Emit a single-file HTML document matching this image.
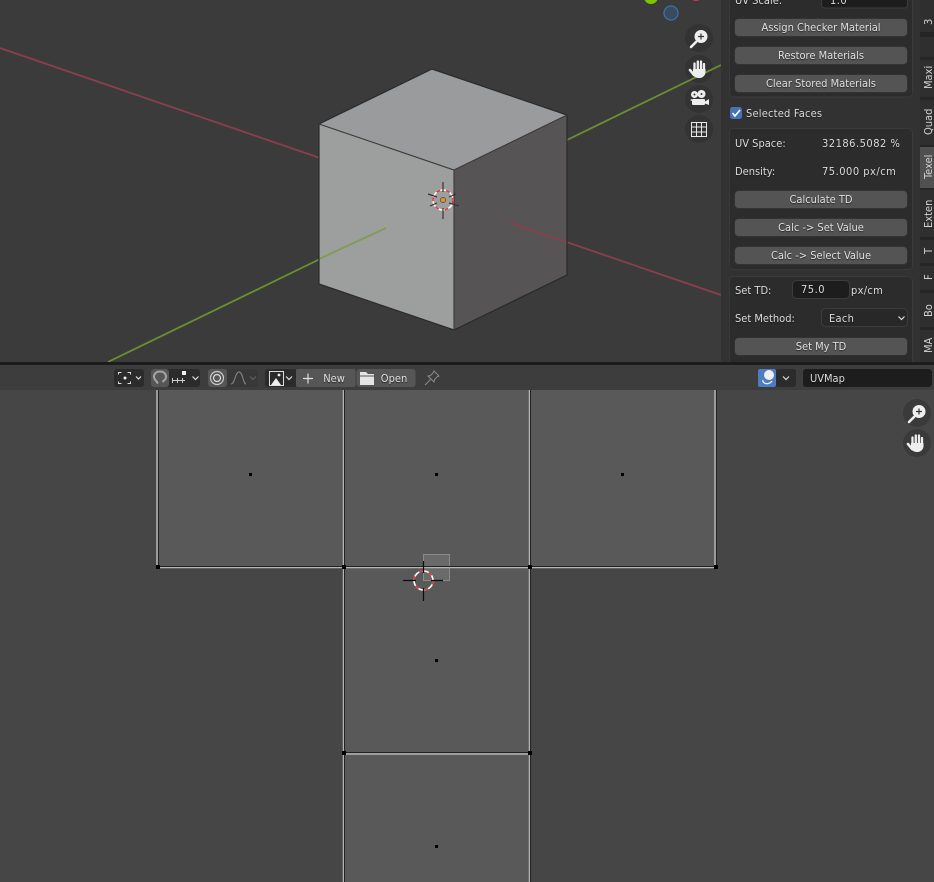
<!DOCTYPE html>
<html><head><meta charset="utf-8"><style>
html,body{margin:0;padding:0;background:#3b3b3b;width:934px;height:882px;overflow:hidden}
#r{position:relative;width:934px;height:882px;overflow:hidden;font:11px/18px "DejaVu Sans Condensed","DejaVu Sans",sans-serif;font-stretch:condensed;color:#dcdcdc}
svg{position:absolute;left:0;top:0}
.t{position:absolute;white-space:nowrap;margin-top:1px;text-shadow:0 1px 1px rgba(0,0,0,.45)}
.b{position:absolute;text-align:center;white-space:nowrap;margin-top:1px;text-shadow:0 1px 1px rgba(0,0,0,.6);color:#e0e0e0}
.n{letter-spacing:.5px}
.v{position:absolute;left:922px;width:14px;height:60px;text-align:center;white-space:nowrap;line-height:14px;writing-mode:vertical-rl;transform:rotate(180deg);color:#d2d2d2}
</style></head><body><div id="r">
<svg width="934" height="882" viewBox="0 0 934 882">
<rect width="934" height="362" fill="#3b3b3b"/>
<circle cx="651" cy="-3" r="7" fill="#7fc400"/>
<circle cx="696" cy="-5" r="6" fill="#e0304a"/>
<circle cx="671" cy="13" r="7" fill="#3b4a5c" stroke="#3a70b0" stroke-width="1.3"/>
<g fill="#333">
<circle cx="699" cy="38" r="14"/><circle cx="699" cy="69" r="14"/><circle cx="699" cy="99" r="14"/><circle cx="699" cy="129" r="14"/>
</g>
<path d="M0 48L320 158" stroke="#8c3e4d" stroke-width="1.800" fill="none"/>
<path d="M567 140L721 65M108 362L320 259" stroke="#6a9030" stroke-width="1.800" fill="none"/>
<path d="M319 124L432 69L567 115L454 170Z" fill="#9a9b9d"/>
<path d="M319 124L454 170V330L319 284Z" fill="#9d9e9e"/>
<path d="M454 170L567 115V275L454 330Z" fill="#575455"/>
<path d="M319 259L386 228" stroke="#7f9c50" stroke-width="1.800" fill="none"/>
<path d="M511 223L721 295" stroke="#8c3e4d" stroke-width="1.800" fill="none"/>
<path d="M319 124L432 69L567 115V275L454 330L319 284Z" fill="none" stroke="#2a2a2a" stroke-width="1.200"/>
<path d="M319 124L454 170L567 115M454 170V330" fill="none" stroke="#3a3a3a" stroke-width="1.100"/>
<g fill="none">
<circle cx="443" cy="200" r="10" stroke="#fff" stroke-width="1.600"/>
<circle cx="443" cy="200" r="10" stroke="#e0383e" stroke-width="1.600" stroke-dasharray="4 6"/>
<path d="M443 182V192M443 208V219M428 194L437 197M449 203L459 206M430 206L437 203M449 197L456 194" stroke="#333" stroke-width="1.200"/>
</g>
<circle cx="443" cy="200" r="2.600" fill="#f0901e" stroke="#333" stroke-width=".6"/>
<circle cx="701" cy="36.500" r="6.500" fill="#eee"/><path d="M696 42L691 47" stroke="#eee" stroke-width="2.600" stroke-linecap="round"/><path d="M698 36.500H704M701 33.500V39.500" stroke="#333" stroke-width="1.200"/>
<g stroke="#eee" stroke-linecap="round" fill="none"><path d="M694.500 70V63.500M697.800 70V61.500M701 70V61.500M704 71V64" stroke-width="2.300"/><path d="M690 70L694 75" stroke-width="2.600"/></g>
<path d="M693 69H705.500V72C705.500 75 703 78 699.500 78C696.500 78 694.500 77 693 75Z" fill="#eee"/>
<g fill="#eee"><circle cx="694.500" cy="94.500" r="3.500"/><circle cx="701.500" cy="94" r="4"/><rect x="692" y="99" width="13" height="6" rx="1"/><path d="M705 101.500L709 99V105L705 103.500ZM690 100L692 99V101Z"/></g>
<circle cx="694.500" cy="94.500" r="1" fill="#333"/><circle cx="701.500" cy="94" r="1" fill="#333"/>
<path d="M691.500 122.500H706.500V136.500H691.500ZM691.500 127H706.500M691.500 132H706.500M696.500 122.500V136.500M701.500 122.500V136.500" fill="none" stroke="#e8e8e8" stroke-width="1"/>

<rect x="721" y="0" width="213" height="362" fill="#323232"/>
<rect x="729.500" y="-10" width="183" height="107" rx="4" fill="#2c2c2c" stroke="#3a3a3a"/>
<rect x="729.500" y="128.500" width="183" height="141" rx="4" fill="#2c2c2c" stroke="#3a3a3a"/>
<rect x="729.500" y="276.500" width="183" height="95" rx="4" fill="#2c2c2c" stroke="#3a3a3a"/>
<rect x="920" y="0" width="14" height="362" fill="#262626"/>
<g fill="#2f2f2f">
<rect x="920" y="0" width="14" height="32"/><rect x="920" y="37" width="14" height="20"/><rect x="920" y="60" width="14" height="37"/><rect x="920" y="100" width="14" height="45"/><rect x="920" y="190" width="14" height="47"/><rect x="920" y="240" width="14" height="23"/><rect x="920" y="266" width="14" height="24"/><rect x="920" y="293" width="14" height="34"/><rect x="920" y="330" width="14" height="32"/>
</g>
<rect x="920" y="147" width="14" height="41" fill="#505050"/>
<g fill="#545454" stroke="#333" stroke-width="1">
<rect x="734.500" y="18.500" width="173" height="18" rx="4"/><rect x="734.500" y="46.500" width="173" height="18" rx="4"/><rect x="734.500" y="74.500" width="173" height="18" rx="4"/>
<rect x="734.500" y="190.500" width="173" height="18" rx="4"/><rect x="734.500" y="218.500" width="173" height="18" rx="4"/><rect x="734.500" y="246.500" width="173" height="18" rx="4"/>
<rect x="734.500" y="337.500" width="173" height="18" rx="4"/>
</g>
<rect x="821.500" y="-10" width="86" height="18" rx="3" fill="#1d1d1d" stroke="#3d3d3d"/>
<rect x="792.500" y="280.500" width="57" height="18" rx="4" fill="#1d1d1d" stroke="#3d3d3d"/>
<rect x="821.500" y="308.500" width="86" height="18" rx="4" fill="#282828" stroke="#3d3d3d"/>
<path d="M898.500 316.500L901.500 319.500L904.500 316.500" fill="none" stroke="#ddd" stroke-width="1.200"/>
<rect x="730" y="107" width="12" height="12" rx="2.500" fill="#4772b3"/>
<path d="M732.500 113L735 116L740 110" fill="none" stroke="#fff" stroke-width="1.600"/>

<rect y="362" width="934" height="3" fill="#1c1c1c"/>
<rect y="365" width="934" height="25" fill="#3d3d3d"/>
<rect y="390" width="934" height="492" fill="#464646"/>
<circle cx="917" cy="413" r="14" fill="#3a3a3a"/><circle cx="917" cy="443" r="14" fill="#3a3a3a"/>
<g fill="#595959">
<rect x="157" y="390" width="186" height="177"/><rect x="343" y="390" width="186" height="177"/><rect x="529" y="390" width="186" height="177"/>
<rect x="343" y="567" width="186" height="186"/><rect x="343" y="753" width="186" height="129"/>
</g>
<rect x="423.500" y="554.500" width="26" height="26" fill="#6a6a6a" stroke="#8a8a8a"/>
<g fill="none" stroke-width="1">
<path d="M157 390V567.500H715V390M343.500 390V753M529.500 390V882M343.500 753V882M343 754H529" stroke="#b5b5b5" stroke-width="1.500"/>
<path d="M158.500 390V566M344.500 390V566M530.500 390V566M344.500 568V752M530.500 568V752M344.500 755V882M530.500 755V882M157 566.500H715M344 752.500H529M716.500 390V566" stroke="#222" stroke-width="1"/>
</g>
<g fill="#000">
<rect x="156" y="565" width="4" height="4"/><rect x="342" y="565" width="4" height="4"/><rect x="528" y="565" width="4" height="4"/><rect x="714" y="565" width="4" height="4"/>
<rect x="342" y="751" width="4" height="4"/><rect x="528" y="751" width="4" height="4"/>
<rect x="249" y="473" width="3" height="3"/><rect x="435" y="473" width="3" height="3"/><rect x="621" y="473" width="3" height="3"/><rect x="435" y="659" width="3" height="3"/><rect x="435" y="845" width="3" height="3"/>
</g>
<g fill="none">
<circle cx="423.500" cy="580.500" r="9.500" stroke="#fff" stroke-width="1.600"/>
<circle cx="423.500" cy="580.500" r="9.500" stroke="#e0383e" stroke-width="1.600" stroke-dasharray="4 6"/>
<path d="M403 580.500H416M431 580.500H443M423.500 561V573M423.500 588V601" stroke="#0c0c0c" stroke-width="1.200"/>
</g>
<circle cx="919" cy="411.500" r="6.500" fill="#eee"/><path d="M914 417L909 422" stroke="#eee" stroke-width="2.600" stroke-linecap="round"/><path d="M916 411.500H922M919 408.500V414.500" stroke="#333" stroke-width="1.200"/>
<g stroke="#eee" stroke-linecap="round" fill="none"><path d="M912.500 444V437.500M915.800 444V435.500M919 444V435.500M922 445V438" stroke-width="2.300"/><path d="M908 444L912 449" stroke-width="2.600"/></g>
<path d="M911 443H923.500V446C923.500 449 921 452 917.500 452C914.500 452 912.500 451 911 449Z" fill="#eee"/>

<g>
<rect x="114" y="369" width="30" height="18" rx="3" fill="#2b2b2b"/>
<rect x="151" y="369" width="49" height="18" rx="3" fill="#2b2b2b"/>
<rect x="151" y="369" width="18" height="18" rx="3" fill="#565656"/>
<rect x="208" y="369" width="50" height="18" rx="3" fill="#383838"/>
<rect x="208" y="369" width="19" height="18" rx="3" fill="#565656"/>
<rect x="265" y="369" width="32" height="18" rx="3" fill="#2b2b2b"/>
<rect x="296" y="369" width="59.500" height="18" rx="2" fill="#565656"/>
<rect x="356.500" y="369" width="59" height="18" rx="3" fill="#565656"/>
<rect x="758" y="369" width="20" height="18" rx="3" fill="#2b2b2b"/>
<rect x="776" y="369" width="20" height="18" rx="3" fill="#2b2b2b"/>
<rect x="758" y="369" width="18" height="18" rx="2" fill="#4d7cc0"/>
<rect x="803" y="369" width="129" height="18" rx="3" fill="#1d1d1d"/>
</g>
<g fill="none" stroke="#ddd" stroke-width="1">
<path d="M118.500 374.500V372.500H121.500M127.500 372.500H130.500V374.500M130.500 381.500V383.500H127.500M121.500 383.500H118.500V381.500"/>
<path d="M136 376.500L138.500 379L141 376.500M192.500 376.500L195.500 379.500L198.500 376.500M286 376.500L289 379.500L292 376.500" stroke-width="1.200"/>
<path d="M158 383.500L155 379.500C152.500 376 155 371.500 160 371.500C165 371.500 167.500 376 165 379.500L162.500 382" stroke="#a5a5a5" stroke-width="2"/>
<path d="M172.500 378V383M177.500 378V383M182.500 378V383M172 380.500H185" stroke="#ccc"/>
<circle cx="217" cy="378" r="6.500" stroke="#ccc" stroke-width="1.200"/><circle cx="217" cy="378" r="3.500" stroke="#ddd" stroke-width="1.200"/>
<path d="M231 384C235 384 235 372 239 372C243 372 243 384 246 384" stroke="#888"/>
<path d="M250 376.500L253 379.500L256 376.500" stroke="#5e5e5e" stroke-width="1.200"/>
<path d="M269.500 371.500H283.500V385.500H269.500Z" stroke="#ddd"/>
<path d="M303 378.500H313M308 373.500V383.500" stroke="#e0e0e0" stroke-width="1.200"/>
<path d="M434 371L439 376L437.500 376.500L434.500 379.500L434 382L428 376L430.500 375.500L433.500 372.500ZM430.500 379.500L425 385" stroke="#8a8a8a"/>
<path d="M783 376.500L786 379.500L789 376.500" stroke-width="1.200"/>
</g>
<rect x="182" y="371" width="4" height="4" fill="#eee"/>
<circle cx="125" cy="378" r="1.500" fill="#eee"/>
<path d="M271 385L276 378L281 385Z" fill="#eee"/><circle cx="279" cy="375" r="1.400" fill="#eee"/>
<path d="M360 374V372H366L368 374H374V385H360Z" fill="#e4e4e4"/><path d="M360 376H374" stroke="#565656"/>
<circle cx="769" cy="375" r="5" fill="#eee"/><path d="M763 380C762 383 768 386 772 381" fill="none" stroke="#eee" stroke-width="1.300"/>
</svg>

<div class="t" style="left:735px;top:-9px">UV Scale:</div>
<div class="t n" style="left:830px;top:-9px">1.0</div>
<div class="b" style="left:734px;width:174px;top:18px">Assign Checker Material</div>
<div class="b" style="left:734px;width:174px;top:46px">Restore Materials</div>
<div class="b" style="left:734px;width:174px;top:74px">Clear Stored Materials</div>
<div class="t" style="left:746px;top:104px;letter-spacing:.2px">Selected Faces</div>
<div class="t" style="left:735px;top:134px">UV Space:</div>
<div class="t n" style="left:822px;top:134px">32186.5082 %</div>
<div class="t" style="left:735px;top:162px">Density:</div>
<div class="t n" style="left:822px;top:162px">75.000 px/cm</div>
<div class="b" style="left:734px;width:174px;top:190px">Calculate TD</div>
<div class="b" style="left:734px;width:174px;top:218px">Calc -&gt; Set Value</div>
<div class="b" style="left:734px;width:174px;top:246px">Calc -&gt; Select Value</div>
<div class="t" style="left:735px;top:281px">Set TD:</div>
<div class="t n" style="left:801px;top:280px">75.0</div>
<div class="t" style="left:851px;top:281px;letter-spacing:.3px">px/cm</div>
<div class="t" style="left:735px;top:309px">Set Method:</div>
<div class="t" style="left:829px;top:309px;letter-spacing:.3px">Each</div>
<div class="b" style="left:734px;width:174px;top:337px">Set My TD</div>

<div class="v" style="top:-8px">3</div>
<div class="v" style="top:47px">Maxi</div>
<div class="v" style="top:92px">Quad</div>
<div class="v" style="top:137px">Texel</div>
<div class="v" style="top:184px">Exten</div>
<div class="v" style="top:221px">T</div>
<div class="v" style="top:247px">F</div>
<div class="v" style="top:281px">Bo</div>
<div class="v" style="top:315px">MA</div>

<div class="b" style="left:319px;width:30px;top:369px">New</div>
<div class="b" style="left:378px;width:32px;top:369px">Open</div>
<div class="t" style="left:810px;top:369px">UVMap</div>
</div></body></html>
